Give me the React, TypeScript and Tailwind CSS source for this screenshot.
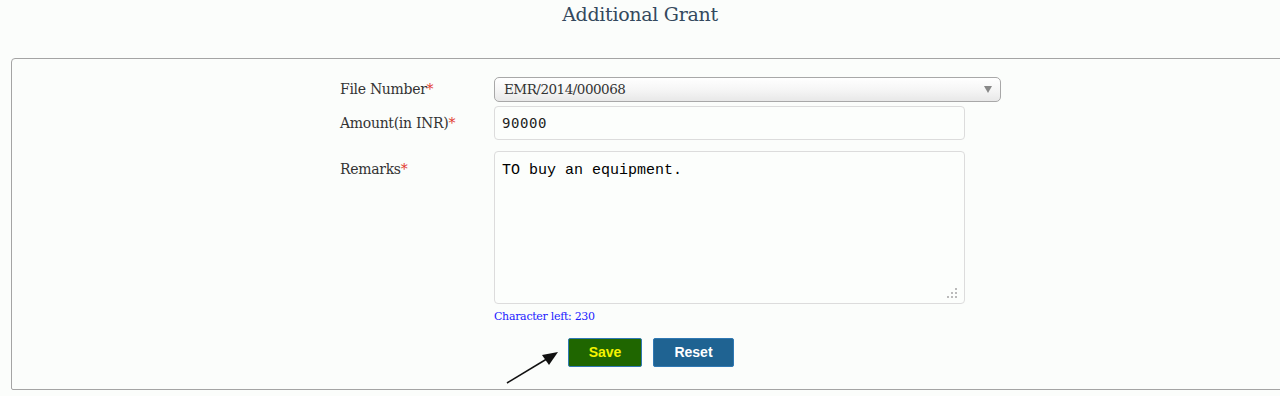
import React from "react";

const slab = { fontFamily: '"DejaVu Serif", "Liberation Serif", serif' };

export default function App() {
  return (
    <div className="w-[1280px] h-[396px] overflow-hidden bg-[#fbfdfb] relative" style={slab}>
      <div className="h-[58px] pt-0 text-center text-[19px] text-[#34495e] tracking-[-0.3px]">
        Additional Grant
      </div>
      <div className="ml-[11px] w-[1290px] h-[332px] border border-[#a4a4a4] rounded-tl-[4px] rounded-bl-[2px] pt-[18px]">
        <div className="ml-[328px] flex flex-col">
          {/* File number */}
          <div className="flex items-center h-[25px]">
            <div className="w-[154px] text-[14px] text-[#333] tracking-[-0.3px]">
              File Number<span className="text-[#e23b2e]">*</span>
            </div>
            <div className="relative w-[507px] h-[25px] border border-[#a8a8a8] rounded-[5px] bg-gradient-to-b from-white via-[#f6f6f6] to-[#e8e8e8] flex items-center px-[9px] text-[13.5px] text-[#333] tracking-[-0.5px]">
              EMR/2014/000068
              <span className="absolute right-[8px] top-[8px] w-0 h-0 border-l-[4px] border-r-[4px] border-t-[7px] border-l-transparent border-r-transparent border-t-[#888]" />
            </div>
          </div>
          {/* Amount */}
          <div className="flex items-center mt-[4px] h-[34px]">
            <div className="w-[154px] text-[14px] text-[#333] tracking-[-0.3px]">
              Amount(in INR)<span className="text-[#e23b2e]">*</span>
            </div>
            <div
              className="w-[471px] h-[34px] border border-[#dcdcdc] rounded-[4px] bg-[#fcfefc] flex items-center px-[7px] text-[14px] tracking-[0.6px] text-[#222]"
              style={{ fontFamily: '"DejaVu Sans Mono", monospace' }}
            >
              90000
            </div>
          </div>
          {/* Remarks */}
          <div className="flex mt-[11px]">
            <div className="w-[154px] pt-[8px] text-[14px] text-[#333] tracking-[-0.3px]">
              Remarks<span className="text-[#e23b2e]">*</span>
            </div>
            <div className="flex flex-col">
              <div
                className="relative w-[471px] h-[153px] border border-[#dcdcdc] rounded-[4px] bg-[#fcfefc] px-[7px] pt-[8px] text-[15px] text-black"
                style={{ fontFamily: '"Liberation Mono", monospace' }}
              >
                TO buy an equipment.
                <svg className="absolute right-[7px] bottom-[5px]" width="10" height="10" viewBox="0 0 10 10">
                  <rect x="8" y="0" width="2" height="2" fill="#bbb" />
                  <rect x="4" y="4" width="2" height="2" fill="#bbb" />
                  <rect x="8" y="4" width="2" height="2" fill="#bbb" />
                  <rect x="0" y="8" width="2" height="2" fill="#bbb" />
                  <rect x="4" y="8" width="2" height="2" fill="#bbb" />
                  <rect x="8" y="8" width="2" height="2" fill="#bbb" />
                </svg>
              </div>
              <div className="mt-[5px] text-[11px] text-[#1a1aff] tracking-[-0.3px]">Character left: 230</div>
              <div className="flex gap-[11px] mt-[12px] ml-[74px]" style={{ fontFamily: '"Liberation Sans", Arial, sans-serif' }}>
                <button className="w-[74px] h-[29px] bg-[#1f6600] border border-[#2f78b3] rounded-[2px] text-[#f4f400] font-bold text-[14px]">
                  Save
                </button>
                <button className="w-[81px] h-[29px] bg-[#1f6392] border border-[#2f78b3] rounded-[2px] text-white font-bold text-[14px]">
                  Reset
                </button>
              </div>
            </div>
          </div>
        </div>
      </div>
      <svg className="absolute left-[500px] top-[345px]" width="65" height="45" viewBox="0 0 65 45">
        <line x1="7" y1="38" x2="50" y2="12" stroke="#111" strokeWidth="1.6" />
        <polygon points="58,7 42,10 49,20" fill="#111" />
      </svg>
    </div>
  );
}
